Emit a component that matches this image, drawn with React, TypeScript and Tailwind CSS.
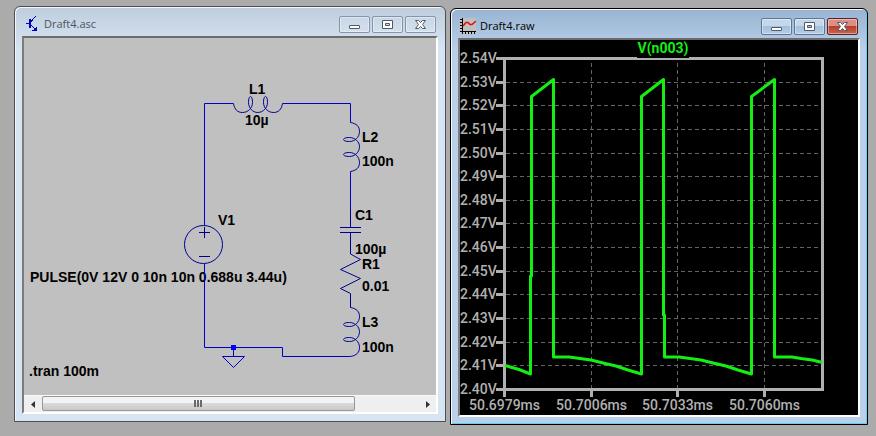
import React from 'react';
import { clsx } from 'clsx';

// one coil drawn left to right, reused for every inductor
const COIL = 'M0 0C1 6 4 9 9 9C15 9 19 4 19 -1C19 -5 18 -7 17 -7C16 -7 15 -5 15 -1C15 4 19 9 24 9C30 9 34 4 34 -1C34 -5 33 -7 32 -7C31 -7 30 -5 30 -1C30 4 34 9 40 9C45 9 48 6 49 0';

const labels = [
    { text: 'L1', x: 249, y: 94 },
    { text: '10µ', x: 245, y: 125 },
    { text: 'L2', x: 362, y: 142 },
    { text: '100n', x: 362, y: 166 },
    { text: 'C1', x: 355, y: 220 },
    { text: '100µ', x: 355, y: 254 },
    { text: 'R1', x: 362, y: 269 },
    { text: '0.01', x: 362, y: 291 },
    { text: 'L3', x: 362, y: 327 },
    { text: '100n', x: 362, y: 352 },
    { text: 'V1', x: 218, y: 225 },
    { text: 'PULSE(0V 12V 0 10n 10n 0.688u 3.44u)', x: 30, y: 282 },
    { text: '.tran 100m', x: 29, y: 376 },
];

const volts = ['2.54V', '2.53V', '2.52V', '2.51V', '2.50V', '2.49V', '2.48V', '2.47V', '2.46V', '2.45V', '2.44V', '2.43V', '2.42V', '2.41V', '2.40V'];

const times = [
    { text: '50.6979ms', x: 504.5 },
    { text: '50.7006ms', x: 591.5 },
    { text: '50.7033ms', x: 677.5 },
    { text: '50.7060ms', x: 764.5 },
];

const TRACE = '505,365.5 519,369.5 530.5,374 530.5,276 531.5,276 531.5,96.5 553.5,79.5 553.5,357 569,357 580,358.5 591,360 603,363 616,366 628,370 641.5,374 641.5,96.5 663.5,79.5 663.5,315 664.5,315 664.5,357 679,357 690,358.5 701,360 713,363 726,366 738,370 751.5,374 751.5,96.5 774.5,79.5 774.5,357 792,357 801,358.5 812,360 822.5,362.5';

const voltY = (i: number) => Math.round(58 + i * 23.64) + 0.5;

function TransistorIcon() {
    return (
        <svg viewBox="0 0 16 16" className="h-4 w-4" shapeRendering="crispEdges" fill="none" stroke="#0000c0">
            <path d="M2 7.5H6M12 0L7 5.5M7 9L11 13" />
            <path d="M6 3V12" strokeWidth="2" />
            <path d="M13 15.5L12.5 11L8.5 14.5Z" fill="#0000c0" stroke="none" />
        </svg>
    );
}

function WaveIcon() {
    return (
        <svg viewBox="0 0 16 16" className="h-4 w-4" fill="none">
            <rect width="16" height="16" fill="#c0c0c0" />
            <path d="M2.5 0V16M0 13.5H16M0 1.5H2M0 4.5H2M0 7.5H2M0 10.5H2M5.5 13V16M8.5 13V16M11.5 13V16M14.5 13V16" stroke="#000" shapeRendering="crispEdges" />
            <path d="M3 8L6 4.5H8L10 6.5H12L16 3" stroke="#e01010" strokeWidth="1.6" />
        </svg>
    );
}

function CaptionIcon({ kind }: { kind: string }) {
    return (
        <svg viewBox="0 0 13 11" className="h-[11px] w-[13px]" fill="#fff" stroke="#505966">
            {kind === 'Minimize' && <rect x="1.5" y="6.5" width="10" height="3" rx="0.5" />}
            {kind === 'Maximize' && <path fillRule="evenodd" d="M1.5 1.5H11.5V9.5H1.5ZM4.5 4.5V6.5H8.5V4.5Z" />}
            {kind === 'Close' && <path d="M1.5 1.5H4.5L6.5 3.5L8.5 1.5H11.5L8.5 5.5L11.5 9.5H8.5L6.5 7.5L4.5 9.5H1.5L4.5 5.5Z" />}
        </svg>
    );
}

function MdiWindow({ title, icon, active, children }: { title: string; icon: React.ReactNode; active?: boolean; children: React.ReactNode }) {
    const buttonStyle = (kind: string) => {
        if (!active) return 'border-[#8494a9] bg-linear-to-b from-[#c9d6e5] to-[#d3e0ee]';
        if (kind === 'Close') return 'border-[#5c2126] bg-linear-to-b from-[#d98f83] from-45% via-[#b93d2a] via-50% to-[#c9654f]';
        return 'border-[#5f7690] bg-linear-to-b from-[#c5d7eb] from-45% via-[#a3bfdd] via-50% to-[#b6cde7]';
    };

    return (
        <section className={clsx('min-w-0 rounded-t-md border px-[7px] pb-[7px]', active ? 'border-black bg-linear-to-b from-[#98b4d2] to-[#bad0e9] to-10% shadow-[inset_1px_1px_0_#f4f8fc,inset_-1px_-1px_0_#62cdf2]' : 'border-[#4a4f55] bg-linear-to-b from-[#becddd] to-[#d7e4f2] to-10% shadow-[inset_1px_1px_0_#f0f6fc]')}>
            <header className="flex h-[29px] items-start px-[2px] pt-[9px]">
                {icon}
                <h2 className={clsx("flex-1 pl-1 font-['Open_Sans',sans-serif] text-[11px] leading-4", active ? 'text-black' : 'text-[#4b5560]')}>{title}</h2>
                <div className="flex gap-[2px]">
                    {['Minimize', 'Maximize', 'Close'].map(kind => (
                        <button key={kind} aria-label={kind} className={clsx('flex h-[17px] w-[31px] items-center justify-center rounded-xs border shadow-[inset_0_0_0_1px_#ffffff66]', buttonStyle(kind))}>
                            <CaptionIcon kind={kind} />
                        </button>
                    ))}
                </div>
            </header>
            <div className="border-2 border-t-[#6b6b6b] border-l-[#7c7c7c] border-r-white border-b-white">{children}</div>
        </section>
    );
}

function Schematic() {
    return (
        <svg viewBox="24 38 412 357" className="block h-auto w-full bg-[#c0c0c0]" role="img" aria-label="Circuit schematic">
            <g fill="#000" className="font-['Liberation_Sans',sans-serif] text-[14px] font-bold">
                {labels.map(l => <text key={`${l.text}-${l.y}`} x={l.x} y={l.y}>{l.text}</text>)}
            </g>
            <g fill="none" stroke="#0000c8">
                <path d="M204.5 225.5V103.5H233.5M282.5 103.5H350.5V122.5M350.5 171.5V210M204.5 263.5V347.5H282.5V356.5H350.5M233.5 347.5V356.5" />
                <path d="M222.5 356.5H244.5L233.5 367.5Z" />
            </g>
            <rect x="231" y="345" width="5" height="5" fill="#0000ff" />
            <g fill="none" stroke="#000090">
                <path d={COIL} transform="translate(233.5 103.5)" />
                <path d={COIL} transform="matrix(0 1 1 0 350.5 122.5)" />
                <path d={COIL} transform="matrix(0 1 1 0 350.5 307.5)" />
                <path d="M350.5 210V227.5M340 227.5H361M340 232.5H361M350.5 232.5V254L360.5 259.5L340.5 269.5L360.5 278.5L340.5 288.5L350.5 293.5V307.5" />
                <circle cx="203.5" cy="244.5" r="19" />
                <path d="M199 232.5H210M204.5 227V238M199 256.5H210" />
            </g>
        </svg>
    );
}

function ScrollBar() {
    return (
        <div className="flex h-[17px] border-t border-[#fafafa] bg-[#efefef]">
            <button aria-label="Scroll left" className="flex w-[18px] items-center justify-center">
                <svg viewBox="0 0 4 7" className="h-[7px] w-1"><path d="M4 0V7L0 3.5Z" fill="#333" /></svg>
            </button>
            <div className="flex-1">
                <div className="flex h-[15px] w-[83%] items-center justify-center gap-px rounded-xs border border-[#979797] bg-linear-to-b from-[#f3f3f3] from-45% via-[#dadada] via-50% to-[#c8c8c8]">
                    <span className="h-[7px] w-[2px] bg-[#6b6b6b]" />
                    <span className="h-[7px] w-[2px] bg-[#6b6b6b]" />
                    <span className="h-[7px] w-[2px] bg-[#6b6b6b]" />
                </div>
            </div>
            <button aria-label="Scroll right" className="flex w-[17px] items-center justify-center">
                <svg viewBox="0 0 4 7" className="h-[7px] w-1"><path d="M0 0V7L4 3.5Z" fill="#333" /></svg>
            </button>
        </div>
    );
}

function WaveformPlot() {
    return (
        <svg viewBox="460 40 398 375" className="block h-auto w-full bg-black font-['Roboto',sans-serif] text-[14px] font-medium" role="img" aria-label="Waveform of V(n003)">
            <g stroke="#646464" strokeDasharray="4 3" shapeRendering="crispEdges">
                {volts.slice(1, -1).map((v, i) => <path key={v} d={`M506 ${voltY(i + 1)}H821`} />)}
                {times.slice(1).map(t => <path key={t.text} d={`M${t.x} 63V388`} />)}
            </g>
            <g stroke="#b0b0b0" strokeWidth="3" fill="none">
                <path d="M504.5 58.5H822.5V389.5H504.5Z" />
                {volts.map((v, i) => <path key={v} d={`M496 ${voltY(i)}H503`} />)}
                {times.map(t => <path key={t.text} d={`M${t.x} 391V397`} />)}
            </g>
            <g fill="#b0b0b0">
                {volts.map((v, i) => <text key={v} x="460" y={voltY(i) + 4.5}>{v}</text>)}
                {times.map(t => <text key={t.text} x={t.x} y="410" textAnchor="middle">{t.text}</text>)}
            </g>
            <rect x="637" y="42" width="52" height="16" fill="#000" />
            <text x="663" y="53" textAnchor="middle" fill="#14ee14" className="font-bold">V(n003)</text>
            <polyline points={TRACE} fill="none" stroke="#14ee14" strokeWidth="3" strokeLinejoin="round" />
        </svg>
    );
}

export default function App() {
    return (
        <main className="grid min-h-screen grid-cols-[432fr_418fr] items-start gap-1 bg-[#ababab] pt-[6px] pr-2 pl-[14px]">
            <MdiWindow title="Draft4.asc" icon={<TransistorIcon />}>
                <Schematic />
                <ScrollBar />
            </MdiWindow>
            <div className="min-w-0 pt-[2px]">
                <MdiWindow title="Draft4.raw" icon={<WaveIcon />} active>
                    <WaveformPlot />
                </MdiWindow>
            </div>
        </main>
    );
}
